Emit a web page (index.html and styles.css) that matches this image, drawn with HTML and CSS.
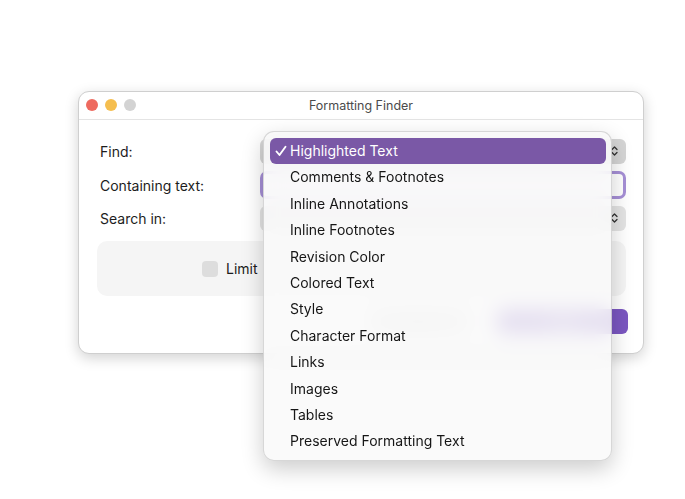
FILE: index.html
```html
<!DOCTYPE html>
<html lang="en">
<head>
    <meta charset="UTF-8">
    <title>Formatting Finder</title>
    <link rel="stylesheet" href="styles.css">
</head>
<body>
    <div class="desktop">
        <div class="window">
            <div class="titlebar">
                <div class="lights">
                    <span class="light light-red"></span>
                    <span class="light light-yellow"></span>
                    <span class="light light-gray"></span>
                </div>
                <div class="title">Formatting Finder</div>
            </div>

            <div class="content">
                <div class="form">
                    <label class="label">Find:</label>
                    <div class="popup popup-dark">
                        <svg class="chevrons" width="7" height="12" viewBox="0 0 7 12"><path d="M1 4.5 L3.5 2 L6 4.5 M1 7.5 L3.5 10 L6 7.5" fill="none" stroke="#333" stroke-width="1.3" stroke-linecap="round" stroke-linejoin="round"/></svg>
                    </div>

                    <label class="label">Containing text:</label>
                    <div class="field"></div>

                    <label class="label">Search in:</label>
                    <div class="popup">
                        <svg class="chevrons" width="7" height="12" viewBox="0 0 7 12"><path d="M1 4.5 L3.5 2 L6 4.5 M1 7.5 L3.5 10 L6 7.5" fill="none" stroke="#333" stroke-width="1.3" stroke-linecap="round" stroke-linejoin="round"/></svg>
                    </div>
                </div>

                <div class="group">
                    <span class="checkbox"></span>
                    <span class="check-label">Limit</span>
                </div>

                <div class="buttons">
                    <button class="btn">Cancel</button>
                    <button class="btn btn-primary">Find</button>
                </div>
            </div>
        </div>

        <!-- popup menu of the Find button -->
        <ul class="menu">
            <li class="menu-item selected">
                <svg class="tick" width="12" height="12" viewBox="0 0 12 12"><path d="M1.5 6.5 L4.5 10 L10.5 1.8" fill="none" stroke="#fff" stroke-width="1.9" stroke-linecap="round" stroke-linejoin="round"/></svg>
                Highlighted Text
            </li>
            <li class="menu-item">Comments &amp; Footnotes</li>
            <li class="menu-item">Inline Annotations</li>
            <li class="menu-item">Inline Footnotes</li>
            <li class="menu-item">Revision Color</li>
            <li class="menu-item">Colored Text</li>
            <li class="menu-item">Style</li>
            <li class="menu-item">Character Format</li>
            <li class="menu-item">Links</li>
            <li class="menu-item">Images</li>
            <li class="menu-item">Tables</li>
            <li class="menu-item">Preserved Formatting Text</li>
        </ul>
    </div>
</body>
</html>
```

FILE: styles.css
```css
body {
    margin: 0;
    background-color: #ffffff;
    font-family: Inter, "Noto Sans", sans-serif;
    color: #1d1d1d;
}

.desktop {
    position: relative;
    height: 499px;
    padding: 91px 0 0 78px;
    box-sizing: border-box;
}

.window {
    width: 566px;
    height: 263px;
    background-color: #ffffff;
    border: 1px solid #cfcfcf;
    border-radius: 11px;
    box-shadow: 0 4px 14px rgba(0, 0, 0, 0.18);
    box-sizing: border-box;
}

.titlebar {
    position: relative;
    height: 27px;
    border-bottom: 1px solid #e4e4e4;
    display: flex;
    align-items: center;
    justify-content: center;
}

.lights {
    position: absolute;
    left: 7px;
    top: 7px;
    display: flex;
    gap: 7px;
}

.light {
    width: 12px;
    height: 12px;
    border-radius: 50%;
}

.light-red {
    background-color: #ee6a5f;
}

.light-yellow {
    background-color: #f5be4f;
}

.light-gray {
    background-color: #d3d3d3;
}

.title {
    font-size: 12.5px;
    color: #4b4b4b;
}

.content {
    padding: 19px 17px 0 18px;
}

.form {
    display: grid;
    grid-template-columns: 160px 1fr;
    row-gap: 7px;
    align-items: center;
    padding-left: 3px;
}

.label {
    font-size: 14px;
}

.popup {
    position: relative;
    height: 25px;
    border-radius: 6px;
    background-color: #e4e4e4;
}

.popup-dark {
    background-color: #d5d5d5;
}

.chevrons {
    position: absolute;
    right: 8px;
    top: 6px;
}

.field {
    height: 22px;
    border: 3px solid #a68fd6;
    border-radius: 7px;
    background-color: #ffffff;
}

.group {
    margin-top: 10px;
    height: 55px;
    border-radius: 10px;
    background-color: #f5f5f5;
    display: flex;
    align-items: center;
    padding-left: 105px;
    gap: 8px;
}

.checkbox {
    width: 16px;
    height: 16px;
    border-radius: 4px;
    background-color: #dddddd;
}

.check-label {
    font-size: 14px;
}

.buttons {
    margin-top: 13px;
    display: flex;
    justify-content: flex-end;
    gap: 28px;
    margin-right: -2px;
}

.btn {
    height: 25px;
    border: none;
    border-radius: 6px;
    padding: 0 16px;
    font-family: inherit;
    font-size: 13px;
    background-color: #e6e6e6;
    color: #c9c9c9;
    width: 100px;
}

.btn-primary {
    width: 131px;
    background-color: #7b57c1;
    color: #ffffff;
}

.menu {
    position: absolute;
    left: 263px;
    top: 131px;
    width: 349px;
    margin: 0;
    padding: 6px 5px 5px 6px;
    list-style: none;
    box-sizing: border-box;
    background-color: rgba(249, 249, 249, 0.84);
    backdrop-filter: blur(10px);
    border: 1px solid rgba(0, 0, 0, 0.14);
    border-radius: 11px;
    box-shadow: 0 8px 22px rgba(0, 0, 0, 0.2);
}

.menu-item {
    position: relative;
    height: 26.4px;
    line-height: 26.4px;
    padding-left: 20px;
    font-size: 14px;
    color: #161616;
    border-radius: 6px;
}

.menu-item.selected {
    background-color: #7a58a6;
    color: #ffffff;
}

.tick {
    position: absolute;
    left: 5px;
    top: 7px;
}
```
